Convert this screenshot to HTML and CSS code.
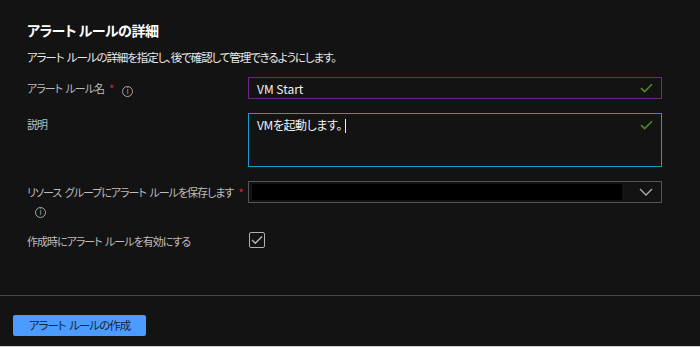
FILE: index.html
```html
<!DOCTYPE html>
<html lang="ja">
<head>
  <meta charset="UTF-8">
  <title>アラート ルールの詳細</title>
  <link rel="stylesheet" href="styles.css">
</head>
<body>
  <div class="page">
    <div class="content">
      <h2>アラート ルールの詳細</h2>
      <p class="desc">アラート ルールの詳細を指定し、後で確認して管理できるようにします。</p>

      <div class="form">
        <!-- ルール名 -->
        <div class="label">アラート ルール名<span class="req">*</span><span class="info">i</span></div>
        <div class="field input-name">
          <span class="value">VM Start</span>
          <svg class="ok" width="13" height="10" viewBox="0 0 13 10"><path d="M1 5.2 L4.6 8.6 L12 1.2" fill="none" stroke="#4f8a1b" stroke-width="1.6"/></svg>
        </div>

        <!-- 説明 -->
        <div class="label">説明</div>
        <div class="field textarea">
          <span class="value">VMを起動します。<span class="caret"></span></span>
          <svg class="ok" width="13" height="10" viewBox="0 0 13 10"><path d="M1 5.2 L4.6 8.6 L12 1.2" fill="none" stroke="#4f8a1b" stroke-width="1.6"/></svg>
        </div>

        <!-- リソース グループ -->
        <div class="label"><span class="nowrap">リソース グループにアラート ルールを保存します<span class="req">*</span></span> <span class="info">i</span></div>
        <div class="field select">
          <span class="masked"></span>
          <svg class="chev" width="14" height="8" viewBox="0 0 14 8"><path d="M1 1 L7 7 L13 1" fill="none" stroke="#b0b0b0" stroke-width="1.3"/></svg>
        </div>

        <!-- 有効化 -->
        <div class="label plain">作成時にアラート ルールを有効にする</div>
        <div>
          <span class="checkbox">
            <svg width="12" height="10" viewBox="0 0 12 10"><path d="M1 5 L4.3 8.2 L11 1.5" fill="none" stroke="#b8b8b8" stroke-width="1.4"/></svg>
          </span>
        </div>
      </div>
    </div>

    <div class="footer">
      <button class="primary">アラート ルールの作成</button>
    </div>
  </div>
</body>
</html>
```

FILE: styles.css
```css
body { margin: 0; background: #131313; color: #e6e6e6; font-family: "Noto Sans CJK JP", "Noto Sans", sans-serif; font-feature-settings: "palt"; }
.page { height: 347px; box-sizing: border-box; border-bottom: 1px solid #cfcfcf; display: flex; flex-direction: column; }
.content { flex: 1; padding: 20px 27px 0; }
h2 { margin: 0; font-size: 14px; line-height: 20px; font-weight: bold; color: #fff; letter-spacing: -0.5px; }
.desc { margin: 8px 0 0; font-size: 11.5px; line-height: 18px; color: #e8e8e8; letter-spacing: -1.1px; word-spacing: 2px; }

.form { margin-top: 11px; display: grid; grid-template-columns: 221px 414px; row-gap: 14px; }
.label { font-size: 11px; line-height: 17px; color: #bdbdbd; padding-top: 3px; letter-spacing: -1px; word-spacing: 2px; }
.label.plain { padding-top: 1px; }
.nowrap { white-space: nowrap; }
.req { color: #e8222c; margin-left: 5px; letter-spacing: 0; }
.info { display: inline-block; width: 9px; height: 9px; border: 1px solid #a8a8a8; border-radius: 50%; margin-left: 8px; font-size: 8px; line-height: 9px; text-align: center; color: #a8a8a8; font-family: "DejaVu Sans", sans-serif; letter-spacing: 0; vertical-align: -1px; }

.field { box-sizing: border-box; display: flex; justify-content: space-between; align-items: center; padding: 0 8px; background: #131313; font-size: 12px; color: #f2f2f2; }
.input-name { height: 22px; border: 1px solid #6a2a86; }
.textarea { height: 54px; border: 1px solid #1a9ad2; align-items: flex-start; padding-top: 2px; line-height: 17px; letter-spacing: -0.4px; }
.textarea .ok { margin-top: 4px; }
.caret { display: inline-block; width: 1px; height: 14px; background: #f0f0f0; margin-left: 3px; vertical-align: -3px; }
.select { height: 22px; border: 1px solid #555; padding: 2px 6px 2px 3px; }
.masked { width: 370px; height: 16px; background: #000; }
.chev { margin-right: 2px; }

.checkbox { box-sizing: border-box; width: 16px; height: 16px; border: 1px solid #b0b0b0; border-radius: 2px; display: flex; align-items: center; justify-content: center; margin-left: 1px; }

.footer { height: 51px; box-sizing: border-box; border-top: 1px solid #474747; padding: 15px 13px 0; }
.primary { width: 133px; height: 21px; border: 0; border-radius: 2px; background: #4c9bff; color: #1e2430; font-family: inherit; font-feature-settings: "palt"; font-size: 11.5px; letter-spacing: -1px; word-spacing: 2px; padding: 0; }
```
